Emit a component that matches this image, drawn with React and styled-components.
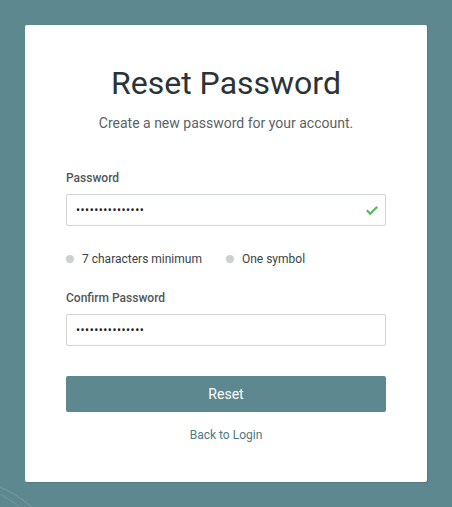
import { createGlobalStyle } from "styled-components";
import styled from "styled-components";

const GlobalStyle = createGlobalStyle`
  html, body {
    margin: 0;
    padding: 0;
    background: #5e8890;
    font-family: Roboto, "Liberation Sans", sans-serif;
  }
`;

const Page = styled.div`
  position: relative;
  width: 452px;
  height: 507px;
  padding: 25px;
  box-sizing: border-box;
  background: #5e8890;
  overflow: hidden;
`;

const Swirl = styled.svg`
  position: absolute;
  left: 0;
  bottom: 0;
  width: 60px;
  height: 30px;
`;

const Card = styled.div`
  position: relative;
  width: 402px;
  height: 457px;
  box-sizing: border-box;
  background: #fff;
  border-radius: 2px;
  box-shadow: 1px 1px 1px rgba(0, 0, 0, 0.12);
  padding: 39px 41px 0 41px;
  display: flex;
  flex-direction: column;
`;

const Title = styled.h1`
  margin: 0;
  font-size: 32px;
  font-weight: 400;
  color: #2b3336;
  text-align: center;
  line-height: 38px;
`;

const Subtitle = styled.p`
  margin: 13px 0 0 0;
  font-size: 14px;
  color: #5b6365;
  text-align: center;
  line-height: 16px;
`;

const Label = styled.label`
  display: block;
  font-size: 12px;
  font-weight: 500;
  color: #4f5759;
  line-height: 14px;
  margin-top: ${(p) => p.$top}px;
`;

const InputWrap = styled.div`
  position: relative;
  margin-top: 9px;
`;

const Input = styled.input`
  display: block;
  width: 100%;
  height: 32px;
  box-sizing: border-box;
  border: 1px solid #cfd3d4;
  border-radius: 2px;
  padding: 0 9px;
  font-family: Roboto, "Liberation Sans", sans-serif;
  font-size: 12px;
  letter-spacing: 0.5px;
  color: #1d2224;
  outline: none;
`;

const Check = styled.svg`
  position: absolute;
  right: 7px;
  top: 9px;
  width: 14px;
  height: 14px;
`;

const Rules = styled.ul`
  list-style: none;
  display: flex;
  gap: 24px;
  margin: 26px 0 0 0;
  padding: 0;
`;

const Rule = styled.li`
  display: flex;
  align-items: center;
  gap: 8px;
  font-size: 12px;
  color: #3a4245;
  line-height: 14px;
  &::before {
    content: "";
    width: 8px;
    height: 8px;
    border-radius: 50%;
    background: #cdd0d1;
  }
`;

const Button = styled.button`
  margin-top: 30px;
  height: 36px;
  width: 100%;
  border: none;
  border-radius: 2px;
  background: #5e8890;
  color: #fff;
  font-family: Roboto, "Liberation Sans", sans-serif;
  font-size: 14px;
  font-weight: 400;
  cursor: pointer;
`;

const BackLink = styled.a`
  align-self: center;
  margin-top: 16px;
  font-size: 12px;
  font-weight: 400;
  color: #4f7880;
  text-decoration: none;
  line-height: 14px;
`;

export default function App() {
  return (
    <>
      <GlobalStyle />
      <Page>
        <Swirl viewBox="0 0 60 30">
          <path d="M0 10 Q15 16 32 30" stroke="rgba(255,255,255,0.12)" strokeWidth="1.2" fill="none" />
          <path d="M0 17 Q10 22 20 30" stroke="rgba(255,255,255,0.1)" strokeWidth="1.2" fill="none" />
        </Swirl>
        <Card>
          <Title>Reset Password</Title>
          <Subtitle>Create a new password for your account.</Subtitle>

          <Label $top={40}>Password</Label>
          <InputWrap>
            <Input type="password" defaultValue="abcdefghijklmno" readOnly />
            <Check viewBox="0 0 24 24">
              <path d="M3 12.5 L9 18.5 L21 6.5" stroke="#5cb85c" strokeWidth="3.8" fill="none" />
            </Check>
          </InputWrap>

          <Rules>
            <Rule>7 characters minimum</Rule>
            <Rule>One symbol</Rule>
          </Rules>

          <Label $top={25}>Confirm Password</Label>
          <InputWrap>
            <Input type="password" defaultValue="abcdefghijklmno" readOnly />
          </InputWrap>

          <Button>Reset</Button>
          <BackLink href="#">Back to Login</BackLink>
        </Card>
      </Page>
    </>
  );
}
